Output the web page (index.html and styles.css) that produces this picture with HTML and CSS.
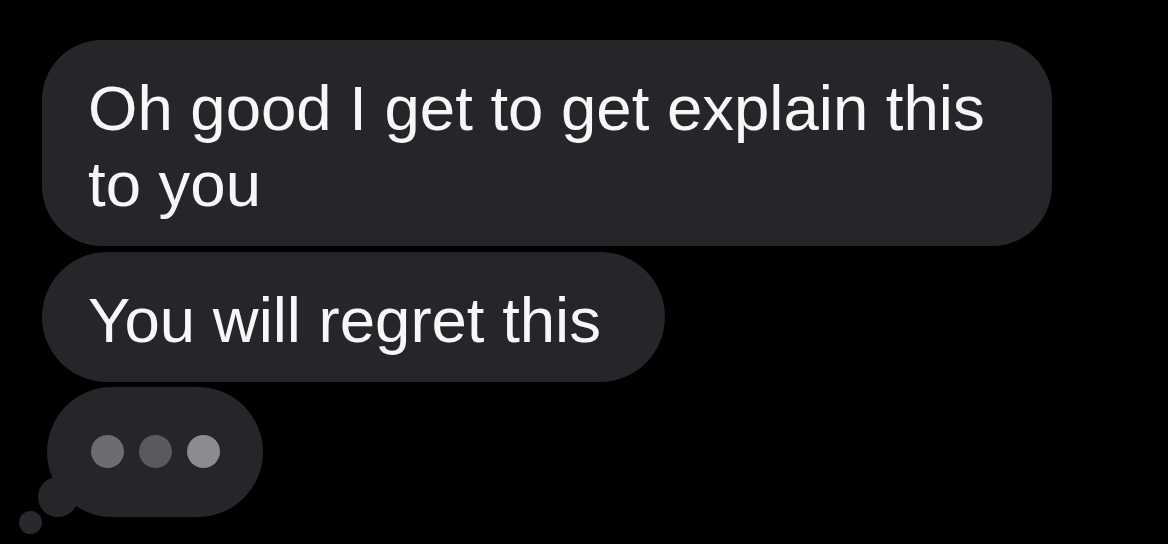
FILE: index.html
```html
<!DOCTYPE html>
<html lang="en">
<head>
<meta charset="utf-8">
<title>Messages</title>
<link rel="stylesheet" href="styles.css">
</head>
<body>
  <main class="thread">
    <div class="bubble">Oh good I get to get explain this to you</div>
    <div class="bubble">You will regret this</div>
    <div class="typing" aria-label="typing">
      <span class="dot dot-a"></span>
      <span class="dot dot-b"></span>
      <span class="dot dot-c"></span>
      <span class="tail tail-big"></span>
      <span class="tail tail-small"></span>
    </div>
  </main>
</body>
</html>
```

FILE: styles.css
```css
html, body {
  margin: 0;
  padding: 0;
  background: #000;
  height: 100%;
  overflow: hidden;
}

.thread {
  display: flex;
  flex-direction: column;
  align-items: flex-start;
  padding: 40px 0 0 42px;
  font-family: "Liberation Sans", Arial, sans-serif;
}

.bubble {
  box-sizing: border-box;
  width: fit-content;
  max-width: 1010px;
  background: #262529;
  color: #f7f7f7;
  font-size: 63.5px;
  line-height: 76px;
  padding: 30px 64px 24px 46px;
  border-radius: 60px;
  margin-bottom: 6px;
}

.bubble + .bubble {
  border-radius: 65px;
  margin-bottom: 5px;
}

.typing {
  position: relative;
  box-sizing: border-box;
  width: 216px;
  height: 130px;
  margin-left: 5px;
  background: #262529;
  border-radius: 65px;
  display: flex;
  align-items: center;
  justify-content: center;
  gap: 15px;
  padding-bottom: 2px;
}

.dot {
  width: 33px;
  height: 33px;
  border-radius: 50%;
}

.dot-a { background: #6d6d71; }
.dot-b { background: #5a5a5e; }
.dot-c { background: #8c8c90; }

.tail {
  position: absolute;
  border-radius: 50%;
  background: #262529;
}

.tail-big {
  left: -9px;
  top: 90px;
  width: 40px;
  height: 40px;
}

.tail-small {
  left: -28px;
  top: 124px;
  width: 23px;
  height: 23px;
  background: #29282c;
}
```
